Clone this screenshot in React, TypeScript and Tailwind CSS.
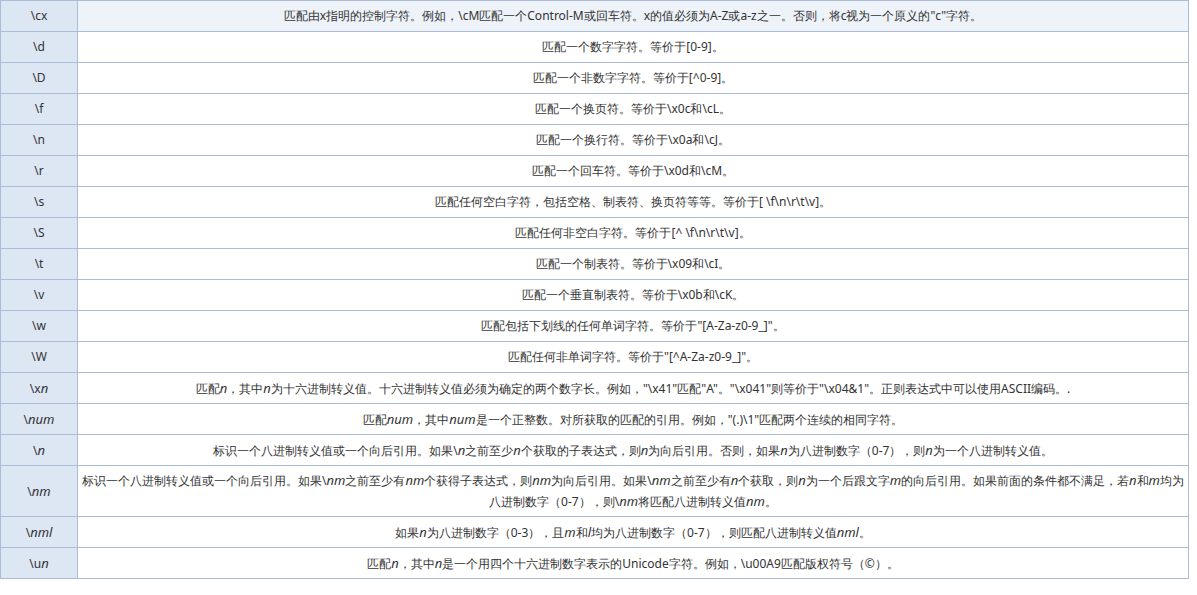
import React from "react";

const I = ({ children }: { children: React.ReactNode }) => (
  <i className="font-[family-name:'Liberation_Serif',serif] text-[13px]">{children}</i>
);
const M = ({ children }: { children: React.ReactNode }) => (
  <span className="font-[family-name:'Liberation_Serif','Noto_Sans_CJK_SC',serif] text-[12px]">{children}</span>
);

const rows: [React.ReactNode, React.ReactNode, boolean?][] = [
  ["\\cx", <>匹配由x指明的控制字符。例如，\cM匹配一个Control-M或回车符。x的值必须为A-Z或a-z之一。否则，将c视为一个原义的"c"字符。</>],
  ["\\d", "匹配一个数字字符。等价于[0-9]。"],
  ["\\D", "匹配一个非数字字符。等价于[^0-9]。"],
  ["\\f", "匹配一个换页符。等价于\\x0c和\\cL。"],
  ["\\n", "匹配一个换行符。等价于\\x0a和\\cJ。"],
  ["\\r", "匹配一个回车符。等价于\\x0d和\\cM。"],
  ["\\s", "匹配任何空白字符，包括空格、制表符、换页符等等。等价于[ \\f\\n\\r\\t\\v]。"],
  ["\\S", "匹配任何非空白字符。等价于[^ \\f\\n\\r\\t\\v]。"],
  ["\\t", "匹配一个制表符。等价于\\x09和\\cI。"],
  ["\\v", "匹配一个垂直制表符。等价于\\x0b和\\cK。"],
  ["\\w", <>匹配包括下划线的任何单词字符。等价于"<M>[A-Za-z0-9_]</M>"。</>],
  ["\\W", <>匹配任何非单词字符。等价于"<M>[^A-Za-z0-9_]</M>"。</>],
  [<>\x<I>n</I></>, <>匹配<I>n</I>，其中<I>n</I>为十六进制转义值。十六进制转义值必须为确定的两个数字长。例如，"<M>\x41</M>"匹配"<M>A</M>"。"<M>\x041</M>"则等价于"<M>\x04&amp;1</M>"。正则表达式中可以使用ASCII编码。.</>],
  [<>\<I>num</I></>, <>匹配<I>num</I>，其中<I>num</I>是一个正整数。对所获取的匹配的引用。例如，"<M>(.)\1</M>"匹配两个连续的相同字符。</>],
  [<>\<I>n</I></>, <>标识一个八进制转义值或一个向后引用。如果\<I>n</I>之前至少<I>n</I>个获取的子表达式，则<I>n</I>为向后引用。否则，如果<I>n</I>为八进制数字（0-7），则<I>n</I>为一个八进制转义值。</>],
  [<>\<I>nm</I></>, <>标识一个八进制转义值或一个向后引用。如果\<I>nm</I>之前至少有<I>nm</I>个获得子表达式，则<I>nm</I>为向后引用。如果\<I>nm</I>之前至少有<I>n</I>个获取，则<I>n</I>为一个后跟文字<I>m</I>的向后引用。如果前面的条件都不满足，若<I>n</I>和<I>m</I>均为<br />八进制数字（0-7），则\<I>nm</I>将匹配八进制转义值<I>nm</I>。</>, true],
  [<>\<I>nml</I></>, <>如果<I>n</I>为八进制数字（0-3），且<I>m</I>和<I>l</I>均为八进制数字（0-7），则匹配八进制转义值<I>nml</I>。</>],
  [<>\u<I>n</I></>, <>匹配<I>n</I>，其中<I>n</I>是一个用四个十六进制数字表示的Unicode字符。例如，\u00A9匹配版权符号（©）。</>],
];

export default function App() {
  return (
    <div className="w-[1197px] h-[595px] bg-white font-[family-name:'Noto_Sans_CJK_SC',sans-serif] text-[12px] text-[#333]">
      <table className="w-[1189px] border-collapse">
        <tbody>
          {rows.map(([k, v, two], i) => (
            <tr key={i} className={two ? "h-[51px]" : "h-[31px]"}>
              <td className="w-[96px] border border-[#aabcd8] bg-[#dde6f3] text-center leading-[18px]">{k}</td>
              <td className={`border border-[#aabcd8] text-center px-1 leading-[20px] whitespace-nowrap ${i === 0 ? "bg-[#eef2f9]" : "bg-white"}`}>{v}</td>
            </tr>
          ))}
        </tbody>
      </table>
    </div>
  );
}
